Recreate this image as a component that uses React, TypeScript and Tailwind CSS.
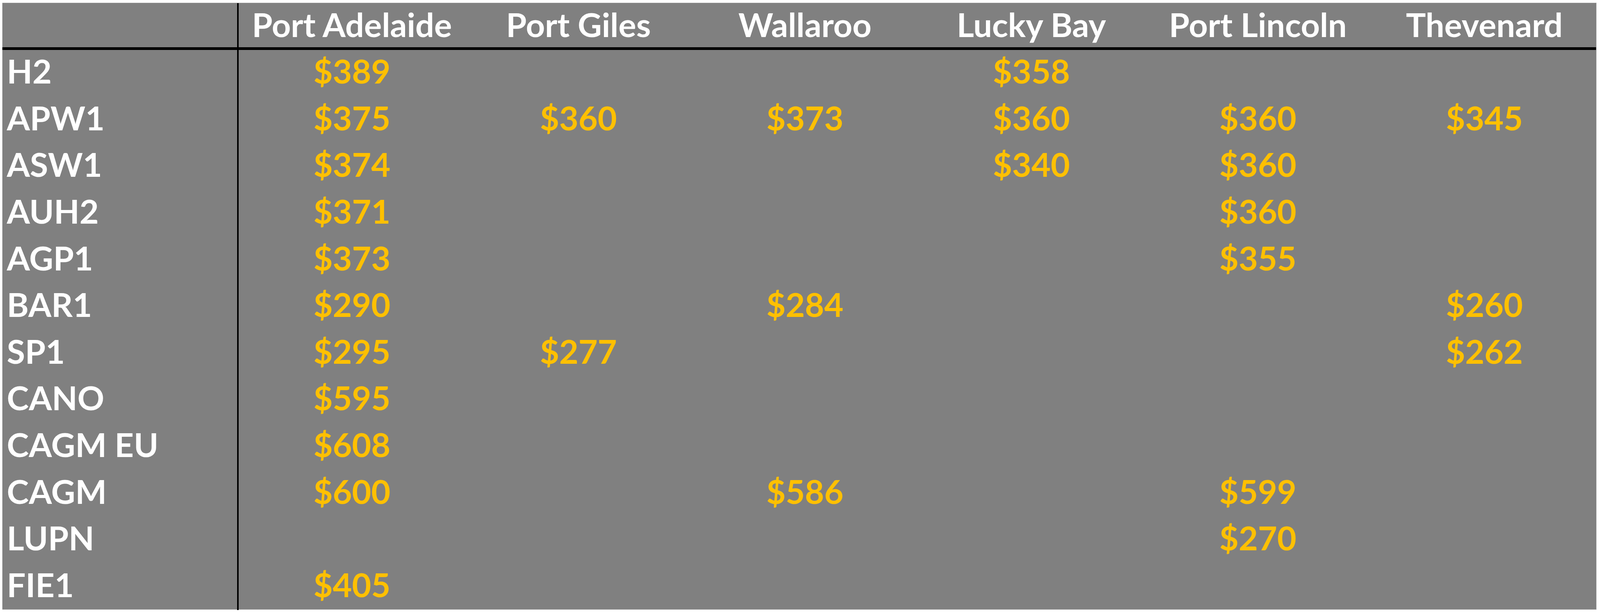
const PORTS = ["Port Adelaide", "Port Giles", "Wallaroo", "Lucky Bay", "Port Lincoln", "Thevenard"]

// prices per grade, one slot per port (null = no quote)
const ROWS: [string, (number | null)[]][] = [
  ["H2", [389, null, null, 358, null, null]],
  ["APW1", [375, 360, 373, 360, 360, 345]],
  ["ASW1", [374, null, null, 340, 360, null]],
  ["AUH2", [371, null, null, null, 360, null]],
  ["AGP1", [373, null, null, null, 355, null]],
  ["BAR1", [290, null, 284, null, null, 260]],
  ["SP1", [295, 277, null, null, null, 262]],
  ["CANO", [595, null, null, null, null, null]],
  ["CAGM EU", [608, null, null, null, null, null]],
  ["CAGM", [600, null, 586, null, 599, null]],
  ["LUPN", [null, null, null, null, 270, null]],
  ["FIE1", [405, null, null, null, null, null]],
]

export default function App() {
  return (
    <div className="w-full h-screen bg-white pt-[7px] pl-[5.5px] font-['Lato',sans-serif] font-bold text-[85px] leading-none overflow-hidden">
      <div className="w-[calc(100%-9px)] h-[1555px] bg-[#808080] border-t border-r border-b border-[#a6a6a6] flex flex-col">
        {/* Header */}
        <div className="flex h-[120px] shrink-0 border-b-[7px] border-black">
          <div className="w-[605.6px] shrink-0 border-r-[4px] border-black" />
          {PORTS.map((p) => (
            <div key={p} className="w-[579.8px] shrink-0 flex items-center justify-center pb-[4px] text-white whitespace-nowrap">
              {p}
            </div>
          ))}
        </div>

        {/* Body */}
        {ROWS.map(([label, prices]) => (
          <div key={label} className="flex h-[119.6px] shrink-0">
            <div className="w-[605.6px] shrink-0 border-r-[4px] border-black flex items-center pl-[12px] pb-[12px] text-white whitespace-nowrap">
              {label}
            </div>
            {prices.map((v, i) => (
              <div key={i} className="w-[579.8px] shrink-0 flex items-center justify-center pb-[12px] text-[#ffc000]">
                {v !== null ? `$${v}` : ""}
              </div>
            ))}
          </div>
        ))}
      </div>
    </div>
  )
}
